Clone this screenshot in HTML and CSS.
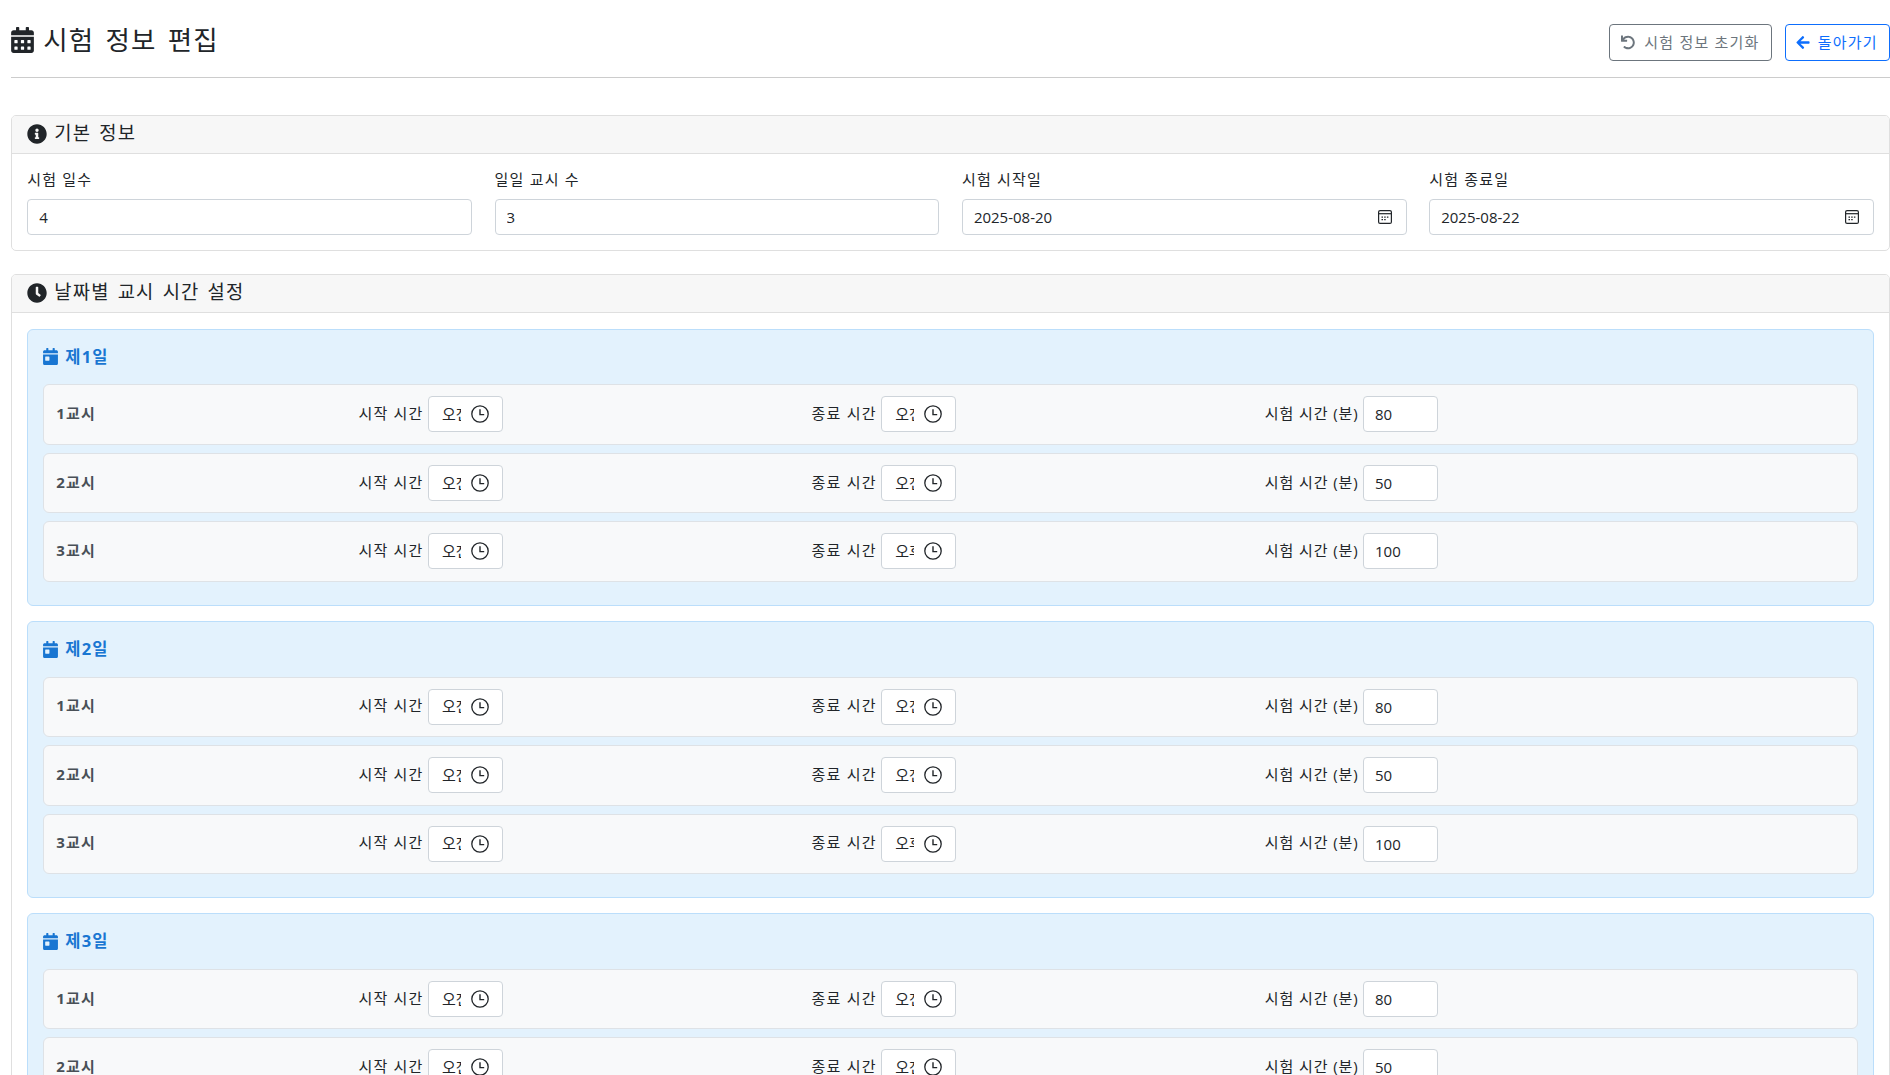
FILE: index.html
```html
<!DOCTYPE html>
<html lang="ko">
<head>
<meta charset="utf-8">
<title>시험 정보 편집</title>
<link rel="stylesheet" href="styles.css">
</head>
<body>
<svg class="defs" aria-hidden="true">
  <symbol id="i-cal" viewBox="0 0 448 512"><path d="M0 464c0 26.5 21.5 48 48 48h352c26.5 0 48-21.5 48-48V192H0v272zm320-196c0-6.6 5.4-12 12-12h40c6.6 0 12 5.4 12 12v40c0 6.6-5.4 12-12 12h-40c-6.6 0-12-5.4-12-12v-40zm0 128c0-6.6 5.4-12 12-12h40c6.6 0 12 5.4 12 12v40c0 6.6-5.4 12-12 12h-40c-6.6 0-12-5.4-12-12v-40zM192 268c0-6.6 5.4-12 12-12h40c6.6 0 12 5.4 12 12v40c0 6.6-5.4 12-12 12h-40c-6.6 0-12-5.4-12-12v-40zm0 128c0-6.6 5.4-12 12-12h40c6.6 0 12 5.4 12 12v40c0 6.6-5.4 12-12 12h-40c-6.6 0-12-5.4-12-12v-40zM64 268c0-6.6 5.4-12 12-12h40c6.6 0 12 5.4 12 12v40c0 6.6-5.4 12-12 12H76c-6.6 0-12-5.4-12-12v-40zm0 128c0-6.6 5.4-12 12-12h40c6.6 0 12 5.4 12 12v40c0 6.6-5.4 12-12 12H76c-6.6 0-12-5.4-12-12v-40zM400 64h-48V16c0-8.8-7.2-16-16-16h-32c-8.8 0-16 7.2-16 16v48H160V16c0-8.8-7.2-16-16-16h-32c-8.8 0-16 7.2-16 16v48H48C21.5 64 0 85.5 0 112v48h448v-48c0-26.5-21.5-48-48-48z"/></symbol>
  <symbol id="i-info" viewBox="0 0 512 512"><path d="M256 8C119 8 8 119.1 8 256c0 137 111 248 248 248s248-111 248-248C504 119.1 393 8 256 8zm0 110c23.2 0 42 18.8 42 42s-18.8 42-42 42-42-18.8-42-42 18.8-42 42-42zm56 254c0 6.6-5.4 12-12 12h-88c-6.6 0-12-5.4-12-12v-24c0-6.6 5.4-12 12-12h12v-64h-12c-6.6 0-12-5.4-12-12v-24c0-6.6 5.4-12 12-12h64c6.6 0 12 5.4 12 12v100h12c6.6 0 12 5.4 12 12v24z"/></symbol>
  <symbol id="i-clock" viewBox="0 0 512 512"><path d="M256,8C119,8,8,119,8,256S119,504,256,504,504,393,504,256,393,8,256,8Zm92.49,313h0l-20,25a16,16,0,0,1-22.49,2.5h0l-67-49.72a40,40,0,0,1-15-31.23V112a16,16,0,0,1,16-16h32a16,16,0,0,1,16,16V256l58,42.5A16,16,0,0,1,348.49,321Z"/></symbol>
  <symbol id="i-day" viewBox="0 0 448 512"><path d="M0 464c0 26.5 21.5 48 48 48h352c26.5 0 48-21.5 48-48V192H0v272zm64-192c0-8.8 7.2-16 16-16h96c8.800 0 16 7.2 16 16v96c0 8.800-7.2 16-16 16H80c-8.800 0-16-7.200-16-16v-96zM400 64h-48V16c0-8.800-7.200-16-16-16h-32c-8.800 0-16 7.200-16 16v48H160V16c0-8.800-7.200-16-16-16h-32c-8.800 0-16 7.200-16 16v48H48C21.500 64 0 85.500 0 112v48h448v-48c0-26.500-21.500-48-48-48z"/></symbol>
  <symbol id="i-undo" viewBox="0 0 512 512"><path d="M212.333 224.333H12c-6.627 0-12-5.373-12-12V12C0 5.373 5.373 0 12 0h48c6.627 0 12 5.373 12 12v78.112C117.773 39.279 184.260 7.470 258.175 8.007c136.906.994 246.448 111.623 246.157 248.532C504.041 393.258 393.120 504 256.333 504c-64.089 0-122.496-24.313-166.510-64.215-5.099-4.622-5.334-12.554-.467-17.420l33.967-33.967c4.474-4.474 11.662-4.717 16.401-.525C170.760 415.336 211.580 432 256.333 432c97.268 0 176-78.716 176-176 0-97.267-78.716-176-176-176-58.496 0-110.280 28.476-142.274 72.333h98.274c6.627 0 12 5.373 12 12v48c0 6.627-5.373 12-12 12z"/></symbol>
  <symbol id="i-left" viewBox="0 0 448 512"><path d="M257.500 445.100l-22.200 22.200c-9.400 9.400-24.600 9.400-33.900 0L7 273c-9.400-9.400-9.400-24.600 0-33.900L201.400 44.700c9.400-9.400 24.600-9.400 33.900 0l22.200 22.200c9.500 9.500 9.300 25-.4 34.300L136.600 216H424c13.300 0 24 10.700 24 24v32c0 13.300-10.700 24-24 24H136.600l120.500 114.800c9.800 9.300 10 24.800.4 34.300z"/></symbol>
  <symbol id="i-time" viewBox="0 0 18 18"><circle cx="9" cy="9" r="8.200" fill="none" stroke="currentColor" stroke-width="1.300"/><path d="M9 4.200V9.600H13.200" fill="none" stroke="currentColor" stroke-width="1.400"/></symbol>
  <symbol id="i-date" viewBox="0 0 14 14"><rect x=".6" y=".6" width="12.800" height="12.800" rx="1.500" fill="none" stroke="currentColor" stroke-width="1.200"/><path d="M1 3.700H13" stroke="currentColor" stroke-width="1.200"/><path d="M3.500 6.500h1.500v1.300H3.500zM6.200 6.500h1.500v1.300H6.200zM8.900 6.500h1.500v1.300H8.900zM3.500 9h1.500v1.300H3.500zM6.200 9h1.500v1.300H6.200z"/></symbol>
</svg>

<main class="page">
  <header class="top">
    <h1 class="title"><svg class="title-icon"><use href="#i-cal"/></svg>시험 정보 편집</h1>
    <div class="actions">
      <button class="btn btn-gray" type="button"><svg class="btn-icon"><use href="#i-undo"/></svg>시험 정보 초기화</button>
      <button class="btn btn-blue" type="button"><svg class="btn-icon"><use href="#i-left"/></svg>돌아가기</button>
    </div>
  </header>

  <section class="card">
    <h2 class="card-head"><svg class="head-icon"><use href="#i-info"/></svg>기본 정보</h2>
    <div class="card-body basics">
      <div class="field"><label class="field-label">시험 일수</label><input class="control" type="text" value="4"></div>
      <div class="field"><label class="field-label">일일 교시 수</label><input class="control" type="text" value="3"></div>
      <div class="field"><label class="field-label">시험 시작일</label><div class="control date"><span>2025-08-20</span><svg class="date-icon"><use href="#i-date"/></svg></div></div>
      <div class="field"><label class="field-label">시험 종료일</label><div class="control date"><span>2025-08-22</span><svg class="date-icon"><use href="#i-date"/></svg></div></div>
    </div>
  </section>

  <section class="card">
    <h2 class="card-head"><svg class="head-icon"><use href="#i-clock"/></svg>날짜별 교시 시간 설정</h2>
    <div class="card-body days">

      <div class="day">
        <h3 class="day-title"><svg class="day-icon"><use href="#i-day"/></svg>제1일</h3>
        <div class="period">
          <div class="cell period-name"><span class="period-text">1교시</span></div>
          <div class="cell"><span class="cell-label">시작 시간</span><div class="time"><span class="time-text">오전 09:00</span><svg class="time-icon"><use href="#i-time"/></svg></div></div>
          <div class="cell"><span class="cell-label">종료 시간</span><div class="time"><span class="time-text">오전 10:20</span><svg class="time-icon"><use href="#i-time"/></svg></div></div>
          <div class="cell"><span class="cell-label cell-label-wide">시험 시간 (분)</span><input class="control minutes" type="text" value="80"></div>
        </div>
        <div class="period">
          <div class="cell period-name"><span class="period-text">2교시</span></div>
          <div class="cell"><span class="cell-label">시작 시간</span><div class="time"><span class="time-text">오전 10:40</span><svg class="time-icon"><use href="#i-time"/></svg></div></div>
          <div class="cell"><span class="cell-label">종료 시간</span><div class="time"><span class="time-text">오전 11:30</span><svg class="time-icon"><use href="#i-time"/></svg></div></div>
          <div class="cell"><span class="cell-label cell-label-wide">시험 시간 (분)</span><input class="control minutes" type="text" value="50"></div>
        </div>
        <div class="period">
          <div class="cell period-name"><span class="period-text">3교시</span></div>
          <div class="cell"><span class="cell-label">시작 시간</span><div class="time"><span class="time-text">오전 11:50</span><svg class="time-icon"><use href="#i-time"/></svg></div></div>
          <div class="cell"><span class="cell-label">종료 시간</span><div class="time"><span class="time-text">오후 01:30</span><svg class="time-icon"><use href="#i-time"/></svg></div></div>
          <div class="cell"><span class="cell-label cell-label-wide">시험 시간 (분)</span><input class="control minutes" type="text" value="100"></div>
        </div>
      </div>

      <div class="day">
        <h3 class="day-title"><svg class="day-icon"><use href="#i-day"/></svg>제2일</h3>
        <div class="period">
          <div class="cell period-name"><span class="period-text">1교시</span></div>
          <div class="cell"><span class="cell-label">시작 시간</span><div class="time"><span class="time-text">오전 09:00</span><svg class="time-icon"><use href="#i-time"/></svg></div></div>
          <div class="cell"><span class="cell-label">종료 시간</span><div class="time"><span class="time-text">오전 10:20</span><svg class="time-icon"><use href="#i-time"/></svg></div></div>
          <div class="cell"><span class="cell-label cell-label-wide">시험 시간 (분)</span><input class="control minutes" type="text" value="80"></div>
        </div>
        <div class="period">
          <div class="cell period-name"><span class="period-text">2교시</span></div>
          <div class="cell"><span class="cell-label">시작 시간</span><div class="time"><span class="time-text">오전 10:40</span><svg class="time-icon"><use href="#i-time"/></svg></div></div>
          <div class="cell"><span class="cell-label">종료 시간</span><div class="time"><span class="time-text">오전 11:30</span><svg class="time-icon"><use href="#i-time"/></svg></div></div>
          <div class="cell"><span class="cell-label cell-label-wide">시험 시간 (분)</span><input class="control minutes" type="text" value="50"></div>
        </div>
        <div class="period">
          <div class="cell period-name"><span class="period-text">3교시</span></div>
          <div class="cell"><span class="cell-label">시작 시간</span><div class="time"><span class="time-text">오전 11:50</span><svg class="time-icon"><use href="#i-time"/></svg></div></div>
          <div class="cell"><span class="cell-label">종료 시간</span><div class="time"><span class="time-text">오후 01:30</span><svg class="time-icon"><use href="#i-time"/></svg></div></div>
          <div class="cell"><span class="cell-label cell-label-wide">시험 시간 (분)</span><input class="control minutes" type="text" value="100"></div>
        </div>
      </div>

      <div class="day">
        <h3 class="day-title"><svg class="day-icon"><use href="#i-day"/></svg>제3일</h3>
        <div class="period">
          <div class="cell period-name"><span class="period-text">1교시</span></div>
          <div class="cell"><span class="cell-label">시작 시간</span><div class="time"><span class="time-text">오전 09:00</span><svg class="time-icon"><use href="#i-time"/></svg></div></div>
          <div class="cell"><span class="cell-label">종료 시간</span><div class="time"><span class="time-text">오전 10:20</span><svg class="time-icon"><use href="#i-time"/></svg></div></div>
          <div class="cell"><span class="cell-label cell-label-wide">시험 시간 (분)</span><input class="control minutes" type="text" value="80"></div>
        </div>
        <div class="period">
          <div class="cell period-name"><span class="period-text">2교시</span></div>
          <div class="cell"><span class="cell-label">시작 시간</span><div class="time"><span class="time-text">오전 10:40</span><svg class="time-icon"><use href="#i-time"/></svg></div></div>
          <div class="cell"><span class="cell-label">종료 시간</span><div class="time"><span class="time-text">오전 11:30</span><svg class="time-icon"><use href="#i-time"/></svg></div></div>
          <div class="cell"><span class="cell-label cell-label-wide">시험 시간 (분)</span><input class="control minutes" type="text" value="50"></div>
        </div>
      </div>

    </div>
  </section>
</main>
</body>
</html>
```

FILE: styles.css
```css
* { box-sizing: border-box; }

html {
  height: 100%;
  overflow: hidden;
  font-size: 15px;
}

body {
  height: 100%;
  margin: 0;
  overflow: hidden;
  background: #fff;
  color: #212529;
  font-family: "Open Sans", "Noto Sans CJK KR", sans-serif;
  font-size: 15px;
  line-height: 1.5;
  letter-spacing: .08em;
}

.defs { display: none; }

.page { padding-left: 11.25px; }

.top {
  display: flex;
  justify-content: space-between;
  align-items: flex-start;
  padding: 24px 0 16px;
  margin-bottom: 37.5px;
  border-bottom: 1px solid #ccc;
}

.title {
  display: flex;
  align-items: center;
  margin: -2px 0 0;
  font-size: 26.5px;
  font-weight: 400;
  line-height: 36.5px;
  word-spacing: 3px;
}

.title-icon { width: 23px; height: 26px; margin-right: 9px; fill: currentColor; }

.actions { display: flex; gap: 13px; }

.btn {
  display: flex;
  align-items: center;
  height: 36.5px;
  padding: 0 11.25px;
  background: #fff;
  border: 1px solid;
  border-radius: 4px;
  font: inherit;
  letter-spacing: inherit;
}

.btn-gray { color: #6c757d; border-color: #6c757d; padding-right: 11.25px; }
.btn-blue { color: #0d6efd; border-color: #0d6efd; padding-left: 10px; }
.btn-gray .btn-icon { margin-right: 9px; }
.btn-icon { width: 14px; height: 15px; margin-right: 8px; fill: currentColor; }

.card {
  margin-bottom: 23px;
  background: #fff;
  border: 1px solid #dfdfdf;
  border-radius: 5px;
}

.card-head {
  display: flex;
  align-items: center;
  height: 38px;
  margin: 0;
  padding: 0 15px 2px;
  background: #f7f7f7;
  border-bottom: 1px solid #dfdfdf;
  border-radius: 4px 4px 0 0;
  font-size: 18.75px;
  font-weight: 400;
  line-height: 22.5px;
  word-spacing: 2px;
}

.head-icon { width: 20px; height: 20px; margin-right: 7px; fill: currentColor; }

.card-body { padding: 15px; }
.days { padding-top: 15.5px; }

.basics {
  display: grid;
  grid-template-columns: repeat(4, 1fr);
  gap: 22.5px;
}

.field { min-width: 0; }

.field-label { display: block; margin: -1px 0 8.5px; }

.control {
  display: block;
  width: 100%;
  height: 36px;
  padding: 6px 11px;
  background: #fff;
  border: 1px solid #ced4da;
  border-radius: 4px;
  color: #212529;
  font-family: "Open Sans", "Noto Sans CJK KR", sans-serif;
  font-size: 15px;
  line-height: 22px;
  letter-spacing: 0;
}

.date {
  display: flex;
  align-items: center;
  justify-content: space-between;
  padding-right: 14px;
}

.date-icon { width: 14px; height: 14px; fill: currentColor; }

.day {
  margin-bottom: 15px;
  padding: 15px;
  background: #e3f2fd;
  border: 1px solid #bbdefb;
  border-radius: 6px;
}

.day-title {
  display: flex;
  align-items: center;
  margin: 0 0 15px;
  color: #1976d2;
  font-size: 16.5px;
  font-weight: 700;
  line-height: 24.75px;
}

.day-icon { width: 15px; height: 17px; margin-right: 7px; fill: currentColor; }

.period {
  display: grid;
  grid-template-columns: 2fr 3fr 3fr 3fr 1fr;
  align-items: center;
  margin-bottom: 8px;
  padding: 11px 0 11.5px;
  background: #f8f9fa;
  border: 1px solid #dee2e6;
  border-radius: 6px;
}

.cell {
  display: flex;
  align-items: center;
  gap: 5px;
  padding: 0 12px;
}

.cell-label { margin: 0 -.5px 2px 0; }
.cell-label-wide { letter-spacing: .06em; }

.period-name { color: #495057; font-weight: 700; }
.period-text { margin-bottom: 2px; }

.time {
  display: flex;
  align-items: center;
  gap: 10px;
  width: 75px;
  height: 36px;
  padding: 0 12px 0 13px;
  background: #fff;
  border: 1px solid #ced4da;
  border-radius: 4px;
}

.time-text {
  flex: none;
  width: 19px;
  overflow: hidden;
  white-space: nowrap;
  letter-spacing: 0;
  font-size: 15px;
}

.time-icon { flex: none; width: 18px; height: 18px; }

.minutes { width: 75px; }
```
